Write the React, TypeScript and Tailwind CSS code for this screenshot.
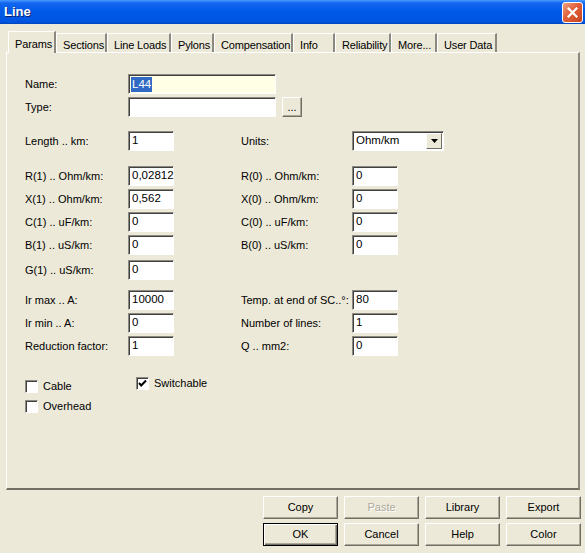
import React from "react";

const FONT = { fontFamily: '"Liberation Sans", Arial, sans-serif' };

const tabs: { label: string; w: string; active?: boolean }[] = [
  { label: "Params", w: "w-[48px]", active: true },
  { label: "Sections", w: "w-[51px]" },
  { label: "Line Loads", w: "w-[64px]" },
  { label: "Pylons", w: "w-[43px]" },
  { label: "Compensation", w: "w-[79px]" },
  { label: "Info", w: "w-[42px]" },
  { label: "Reliability", w: "w-[56px]" },
  { label: "More...", w: "w-[46px]" },
  { label: "User Data", w: "w-[60px]" },
];

function Field({ value, wide }: { value: string; wide?: boolean }) {
  return (
    <div
      className={`h-[20px] ${wide ? "w-[148px]" : "w-[46px]"} border border-t-[#8c8a80] border-l-[#8c8a80] border-r-white border-b-white bg-white shadow-[inset_1px_1px_0_#404040] pl-[3px] flex items-center text-[11.5px] text-black`}
    >
      {value}
    </div>
  );
}

function Row({
  label,
  value,
  rLabel,
  rValue,
  mt,
}: {
  label: string;
  value: string;
  rLabel?: string;
  rValue?: string;
  mt: string;
}) {
  return (
    <div className={`flex items-center h-[20px] ${mt}`}>
      <div className="w-[103px]">{label}</div>
      <Field value={value} />
      {rLabel && (
        <>
          <div className="ml-[67px] w-[111px]">{rLabel}</div>
          <Field value={rValue ?? ""} />
        </>
      )}
    </div>
  );
}

function Check({ label, checked }: { label: string; checked?: boolean }) {
  return (
    <div className="flex items-center h-[13px]">
      <div className="w-[13px] h-[13px] border border-t-[#8c8a80] border-l-[#8c8a80] border-r-white border-b-white bg-white shadow-[inset_1px_1px_0_#404040] flex items-center justify-center">
        {checked && (
          <svg width="9" height="9" viewBox="0 0 9 9">
            <path d="M1 4 L3.2 6.5 L8 1.5" stroke="#000" strokeWidth="2" fill="none" />
          </svg>
        )}
      </div>
      <span className="ml-[5px]">{label}</span>
    </div>
  );
}

function Btn({ label, disabled, def }: { label: string; disabled?: boolean; def?: boolean }) {
  return (
    <div
      className={`w-[75px] h-[23px] flex items-center justify-center bg-[#ece9d8] border ${
        def
          ? "border-black shadow-[inset_1px_1px_0_#fff,inset_-1px_-1px_0_#716f64,inset_-2px_-2px_0_#aca899]"
          : "border-t-white border-l-white border-r-[#716f64] border-b-[#716f64] shadow-[inset_-1px_-1px_0_#aca899]"
      } ${disabled ? "text-[#aca899] [text-shadow:1px_1px_0_#fff]" : "text-black"}`}
    >
      {label}
    </div>
  );
}

export default function App() {
  return (
    <div className="w-[585px] h-[553px] bg-[#ece9d8] text-[11px] text-black overflow-hidden" style={FONT}>
      {/* Title bar */}
      <div className="h-[24px] bg-[linear-gradient(to_bottom,#4a9bff_0px,#1466f0_3px,#005ae8_12px,#0054e0_22px,#0043b8_24px)] flex items-center justify-between pl-[4px] pr-[2px]">
        <span className="text-white font-bold text-[13px] [text-shadow:1px_1px_0_#0a1e6e]">Line</span>
        <div className="w-[21px] h-[21px] rounded-[3px] border border-white bg-[linear-gradient(to_bottom_right,#f0a080,#e0603a_45%,#c8421c)] flex items-center justify-center">
          <svg width="11" height="11" viewBox="0 0 11 11">
            <path d="M1.5 1.5 L9.5 9.5 M9.5 1.5 L1.5 9.5" stroke="#fff" strokeWidth="2.2" strokeLinecap="square" />
          </svg>
        </div>
      </div>

      {/* Tabs */}
      <div className="flex items-end h-[28px] pl-[8px] tracking-[-0.15px]">
        {tabs.map((t) =>
          t.active ? (
            <div
              key={t.label}
              className={`${t.w} h-[22px] -mb-px relative z-10 bg-[#ece9d8] border-t border-l border-white border-r-2 border-r-[#8c8a80] pl-[6px] pt-[4px] rounded-tl-[2px]`}
            >
              {t.label}
            </div>
          ) : (
            <div
              key={t.label}
              className={`${t.w} h-[19px] border-t border-l border-white border-r-2 border-r-[#8c8a80] pl-[6px] pt-[3px]`}
            >
              {t.label}
            </div>
          )
        )}
      </div>

      {/* Panel */}
      <div className="ml-[6px] w-[574px] h-[438px] border-t border-l border-white border-r-2 border-r-[#8c8a80] border-b-2 border-b-[#716f64] pl-[18px] pt-[21px]">
        <div className="flex items-center h-[20px]">
          <div className="w-[103px]">Name:</div>
          <div className="h-[20px] w-[148px] border border-t-[#8c8a80] border-l-[#8c8a80] border-r-white border-b-white bg-[#ffffe6] shadow-[inset_1px_1px_0_#404040] pl-[2px] flex items-center text-[11.5px]">
            <span className="bg-[#316ac5] text-white px-px leading-[15px]">L44</span>
          </div>
        </div>
        <div className="flex items-center h-[20px] mt-[3px]">
          <div className="w-[103px]">Type:</div>
          <Field value="" wide />
          <div className="ml-[6px] w-[20px] h-[20px] bg-[#ece9d8] border border-t-white border-l-white border-r-[#716f64] border-b-[#716f64] shadow-[inset_-1px_-1px_0_#aca899] flex items-end justify-center pb-[3px] leading-none">
            ...
          </div>
        </div>

        <div className="flex items-center h-[20px] mt-[14px]">
          <div className="w-[103px]">Length .. km:</div>
          <Field value="1" />
          <div className="ml-[67px] w-[111px]">Units:</div>
          <div className="h-[20px] w-[92px] border border-t-[#8c8a80] border-l-[#8c8a80] border-r-white border-b-white bg-white shadow-[inset_1px_1px_0_#404040] flex items-center text-[11.5px]">
            <span className="flex-1 pl-[3px]">Ohm/km</span>
            <div className="w-[16px] h-[16px] mr-px bg-[#ece9d8] border border-t-white border-l-white border-r-[#716f64] border-b-[#716f64] flex items-center justify-center">
              <svg width="7" height="4" viewBox="0 0 7 4">
                <path d="M0 0 H7 L3.5 4 Z" fill="#000" />
              </svg>
            </div>
          </div>
        </div>

        <Row mt="mt-[15px]" label="R(1) .. Ohm/km:" value="0,02812" rLabel="R(0) .. Ohm/km:" rValue="0" />
        <Row mt="mt-[3px]" label="X(1) .. Ohm/km:" value="0,562" rLabel="X(0) .. Ohm/km:" rValue="0" />
        <Row mt="mt-[3px]" label="C(1) .. uF/km:" value="0" rLabel="C(0) .. uF/km:" rValue="0" />
        <Row mt="mt-[3px]" label="B(1) .. uS/km:" value="0" rLabel="B(0) .. uS/km:" rValue="0" />
        <Row mt="mt-[5px]" label="G(1) .. uS/km:" value="0" />

        <Row mt="mt-[10px]" label="Ir max .. A:" value="10000" rLabel="Temp. at end of SC..°:" rValue="80" />
        <Row mt="mt-[3px]" label="Ir min .. A:" value="0" rLabel="Number of lines:" rValue="1" />
        <Row mt="mt-[3px]" label="Reduction factor:" value="1" rLabel="Q .. mm2:" rValue="0" />

        <div className="flex mt-[21px]">
          <div className="w-[111px] pt-[3px] flex flex-col gap-[7px]">
            <Check label="Cable" />
            <Check label="Overhead" />
          </div>
          <Check label="Switchable" checked />
        </div>
      </div>

      {/* Buttons */}
      <div className="ml-[263px] mt-[6px] grid grid-cols-4 gap-x-[6px] gap-y-[4px] w-[318px]">
        <Btn label="Copy" />
        <Btn label="Paste" disabled />
        <Btn label="Library" />
        <Btn label="Export" />
        <Btn label="OK" def />
        <Btn label="Cancel" />
        <Btn label="Help" />
        <Btn label="Color" />
      </div>
    </div>
  );
}
